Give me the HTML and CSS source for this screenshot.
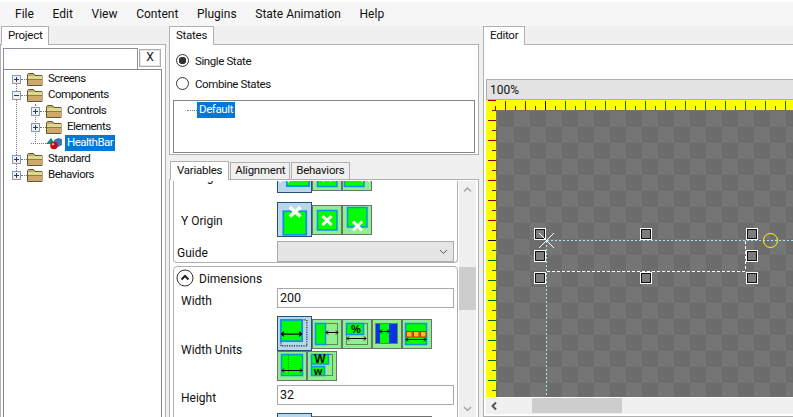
FILE: index.html
```html
<!DOCTYPE html>
<html lang="en">
<head>
  <meta charset="UTF-8">
  <title>Gum</title>
  <link rel="stylesheet" href="styles.css">
</head>
<body>

  <!-- shared icons -->
  <svg class="defs" width="0" height="0">
    <defs>
      <symbol id="folder" viewBox="0 0 16 13">
        <path d="M.5 12.5V1.5l1-1h5l1.5 2h7v10z" fill="#c9a468" stroke="#66562c"/>
        <rect x="1" y="3" width="14" height="3" fill="#dcd990"/>
        <rect x="1" y="6" width="14" height="1" fill="#8f7a42"/>
        <rect x="1" y="7" width="14" height="5" fill="#cfa96c"/>
      </symbol>
      <symbol id="plus" viewBox="0 0 9 9">
        <rect x=".5" y=".5" width="8" height="8" fill="#eef0f4" stroke="#8e99a8"/>
        <path d="M2 4.5h5M4.5 2v5" stroke="#23387a"/>
      </symbol>
      <symbol id="minus" viewBox="0 0 9 9">
        <rect x=".5" y=".5" width="8" height="8" fill="#eef0f4" stroke="#8e99a8"/>
        <path d="M2 4.5h5" stroke="#23387a"/>
      </symbol>
      <pattern id="ticks-top-red" width="20" height="10" patternUnits="userSpaceOnUse">
        <path d="M19.5 1v9M9.5 6v4" stroke="#a00000"/>
      </pattern>
      <pattern id="ticks-top-green" width="20" height="10" patternUnits="userSpaceOnUse">
        <path d="M19.5 1v9M9.5 6v4" stroke="#0b6b0b"/>
      </pattern>
      <pattern id="ticks-left-red" width="10" height="20" patternUnits="userSpaceOnUse">
        <path d="M2 10.5h8M6 .5h4" stroke="#a00000"/>
      </pattern>
      <pattern id="ticks-left-green" width="10" height="20" patternUnits="userSpaceOnUse">
        <path d="M2 10.5h8M6 .5h4" stroke="#0b6b0b"/>
      </pattern>
    </defs>
  </svg>

  <header class="menubar">
    <span>File</span>
    <span>Edit</span>
    <span>View</span>
    <span>Content</span>
    <span>Plugins</span>
    <span>State Animation</span>
    <span>Help</span>
  </header>

  <div class="columns">

    <!-- project -->
    <section class="col col-project">
      <div class="tabs"><div class="tab tab-on">Project</div></div>
      <div class="panel project-panel">
        <div class="search">
          <div class="search-input"></div>
          <div class="search-clear">X</div>
        </div>
        <div class="tree">
          <i class="tree-line tree-line-root"></i>
          <i class="tree-line tree-line-sub"></i>
          <div class="tree-row">
            <svg class="expander"><use href="#plus"/></svg><i class="stub"></i>
            <svg class="folder"><use href="#folder"/></svg><span class="node">Screens</span>
          </div>
          <div class="tree-row">
            <svg class="expander"><use href="#minus"/></svg><i class="stub"></i>
            <svg class="folder"><use href="#folder"/></svg><span class="node">Components</span>
          </div>
          <div class="tree-row level-1">
            <svg class="expander"><use href="#plus"/></svg><i class="stub"></i>
            <svg class="folder"><use href="#folder"/></svg><span class="node">Controls</span>
          </div>
          <div class="tree-row level-1">
            <svg class="expander"><use href="#plus"/></svg><i class="stub"></i>
            <svg class="folder"><use href="#folder"/></svg><span class="node">Elements</span>
          </div>
          <div class="tree-row level-1">
            <i class="stub stub-leaf"></i>
            <svg class="folder" viewBox="0 0 16 13">
              <path d="M0 7 5 1l4 6z" fill="#0d8a82"/>
              <path d="M8 3l4-2 4 1v6l-4 2-4-2z" fill="#3b74b8"/>
              <circle cx="8" cy="8.5" r="3.800" fill="#c40d12"/>
              <circle cx="7" cy="7.300" r="1.200" fill="#f4a0a0"/>
            </svg><span class="node node-on">HealthBar</span>
          </div>
          <div class="tree-row">
            <svg class="expander"><use href="#plus"/></svg><i class="stub"></i>
            <svg class="folder"><use href="#folder"/></svg><span class="node">Standard</span>
          </div>
          <div class="tree-row">
            <svg class="expander"><use href="#plus"/></svg><i class="stub"></i>
            <svg class="folder"><use href="#folder"/></svg><span class="node">Behaviors</span>
          </div>
        </div>
      </div>
    </section>

    <!-- states + variables -->
    <section class="col col-middle">
      <div class="tabs"><div class="tab tab-on">States</div></div>
      <div class="panel states-panel">
        <div class="radio-row"><i class="radio radio-on"></i>Single State</div>
        <div class="radio-row"><i class="radio"></i>Combine States</div>
        <div class="state-list">
          <i class="state-stub"></i><span class="node node-on">Default</span>
        </div>
      </div>

      <div class="tabs tabs-vars">
        <div class="tab tab-on">Variables</div>
        <div class="tab">Alignment</div>
        <div class="tab">Behaviors</div>
      </div>
      <div class="panel vars-panel">
        <div class="vars-scroll">
          <div class="group group-origin">
            <div class="prop prop-first">
              <label>X Origin</label>
              <div class="choices">
                <div class="choice choice-on"><svg viewBox="0 0 28 28"><rect class="frame" x="7.500" y="4" width="19" height="19"/><path class="cross" d="M1 10l9 9m0-9l-9 9"/></svg></div>
                <div class="choice"><svg viewBox="0 0 28 28"><rect class="frame" x="4.500" y="5" width="19.500" height="19.500"/><path class="cross" d="M9.500 10l9 9m0-9l-9 9"/></svg></div>
                <div class="choice"><svg viewBox="0 0 28 28"><rect class="frame" x="1.500" y="5" width="19.500" height="19.500"/><path class="cross" d="M18 10l9 9m0-9l-9 9"/></svg></div>
              </div>
            </div>
            <div class="prop prop-y">
              <label>Y Origin</label>
              <div class="choices">
                <div class="choice choice-on"><svg viewBox="0 0 28 28"><rect class="frame" x="4.500" y="7" width="19.500" height="20"/><path class="cross" d="M10 3.500l9 8m0-8l-9 8"/></svg></div>
                <div class="choice"><svg viewBox="0 0 28 28"><rect class="frame" x="4.500" y="4.500" width="19.500" height="19.500"/><path class="cross" d="M9.500 10l9 9m0-9l-9 9"/></svg></div>
                <div class="choice"><svg viewBox="0 0 28 28"><rect class="frame" x="4.500" y="1.500" width="19.500" height="19.500"/><path class="cross" d="M10 15.500l9 9m0-9l-9 9"/></svg></div>
              </div>
            </div>
            <div class="prop prop-guide">
              <label class="label-guide">Guide</label>
              <div class="dropdown">
                <svg width="9" height="6" viewBox="0 0 9 6"><path d="M1 1l3.500 3.500L8 1" fill="none" stroke="#555"/></svg>
              </div>
            </div>
          </div>

          <div class="group group-dims">
            <div class="group-head">
              <svg width="18" height="18" viewBox="0 0 18 18">
                <circle cx="9" cy="9" r="8" fill="#fff" stroke="#333"/>
                <path d="M5.500 10.500 9 7l3.500 3.500" fill="none" stroke="#222" stroke-width="2"/>
              </svg>
              <span class="group-title">Dimensions</span>
            </div>
            <div class="prop">
              <label class="label-low">Width</label>
              <div class="textbox">200</div>
            </div>
            <div class="prop prop-units">
              <label>Width Units</label>
              <div class="choices">
                <div class="choice choice-on"><svg viewBox="0 0 28 28">
                  <rect class="dash" x="2.500" y="2.500" width="22" height="22"/>
                  <rect class="frame" x="2.500" y="2.500" width="18" height="18"/>
                  <path class="arrow" d="M3 14.500h17M5 12.500l-2 2 2 2M18 12.500l2 2-2 2"/></svg></div>
                <div class="choice"><svg viewBox="0 0 28 28">
                  <rect class="dash" x="2.500" y="3.500" width="22" height="21"/>
                  <rect class="frame" x="2.500" y="3.500" width="10" height="21"/>
                  <path class="arrow" d="M13 12.500h12M15 10.500l-2 2 2 2M23 10.500l2 2-2 2"/></svg></div>
                <div class="choice"><svg viewBox="0 0 28 28">
                  <rect class="dash" x="3.500" y="3.500" width="21" height="21"/>
                  <rect class="frame" x="3.500" y="3.500" width="17" height="11"/>
                  <text class="pct" x="13" y="13">%</text>
                  <path class="arrow" d="M4 18.500h19M6 16.500l-2 2 2 2M21 16.500l2 2-2 2"/></svg></div>
                <div class="choice"><svg viewBox="0 0 28 28">
                  <rect class="dash" x="2.500" y="3.500" width="22" height="20"/>
                  <rect x="3" y="4" width="4" height="19" fill="#0b2ee8"/>
                  <rect x="7" y="4" width="9" height="19" fill="#0f0"/>
                  <rect x="16" y="4" width="8" height="19" fill="#0b2ee8"/>
                  <path class="arrow" d="M7 11.500h9M9 9.500l-2 2 2 2M14 9.500l2 2-2 2"/></svg></div>
                <div class="choice"><svg viewBox="0 0 28 28">
                  <rect class="frame" x="2.500" y="3.500" width="21" height="21"/>
                  <rect class="cell" x="3.500" y="11.500" width="5.500" height="5.500"/>
                  <rect class="cell" x="10.500" y="11.500" width="5.500" height="5.500"/>
                  <rect class="cell" x="17.500" y="11.500" width="5.500" height="5.500"/>
                  <path class="arrow" d="M3 19.500h20M5 17.500l-2 2 2 2M21 17.500l2 2-2 2"/></svg></div>
                <div class="choice"><svg viewBox="0 0 28 28">
                  <rect class="frame" x="3.500" y="2.500" width="21" height="21"/>
                  <path d="M10.500 3v20" stroke="#0a9a2a" stroke-dasharray="1 1"/>
                  <path class="arrow" d="M4 18.500h20M6 16.500l-2 2 2 2M22 16.500l2 2-2 2"/></svg></div>
                <div class="choice"><svg viewBox="0 0 28 28">
                  <rect class="dash" x="3.500" y="2.500" width="21" height="21"/>
                  <rect class="frame" x="3.500" y="2.500" width="17" height="9.500"/>
                  <rect class="frame" x="3.500" y="14.500" width="13" height="9"/>
                  <text class="big-w" x="12" y="11">W</text>
                  <text class="small-w" x="10" y="22.500">w</text></svg></div>
              </div>
            </div>
            <div class="prop">
              <label class="label-low">Height</label>
              <div class="textbox">32</div>
            </div>
            <div class="prop prop-height-units">
              <label></label>
              <div class="choices">
                <div class="choice choice-on"></div>
                <div class="choice"></div>
                <div class="choice"></div>
                <div class="choice"></div>
                <div class="choice"></div>
              </div>
            </div>
          </div>
        </div>

        <div class="vscroll">
          <svg width="17" height="17" viewBox="0 0 17 17"><path d="M5 10.500l3.500-3.500 3.500 3.500" fill="none" stroke="#a6a6a6" stroke-width="1.500"/></svg>
          <div class="vtrack"><div class="vthumb"></div></div>
          <svg width="17" height="17" viewBox="0 0 17 17"><path d="M5 7l3.500 3.500L12 7" fill="none" stroke="#a6a6a6" stroke-width="1.500"/></svg>
        </div>
      </div>
    </section>

    <!-- editor -->
    <section class="col col-editor">
      <div class="tabs"><div class="tab tab-on">Editor</div></div>
      <div class="panel editor-panel">
        <div class="zoombar">100%</div>
        <svg class="ruler-top" width="307" height="10">
          <rect width="59" height="10" fill="url(#ticks-top-red)"/>
          <path d="M2 .5h8" stroke="#a00000"/>
          <path d="M59.500 1v9" stroke="#000"/>
          <rect x="60" width="247" height="10" fill="url(#ticks-top-green)"/>
        </svg>
        <div class="stage">
          <svg class="ruler-left" width="10" height="287">
            <rect width="10" height="130" fill="url(#ticks-left-red)"/>
            <path d="M2 130.500h8" stroke="#111"/>
            <rect y="131" width="10" height="156" fill="url(#ticks-left-green)"/>
          </svg>
          <div class="canvas">
            <svg class="overlay" width="297" height="287" shape-rendering="crispEdges">
              <path class="guide" d="M50.500 130.500H297M50.500 130.500V287"/>
              <path class="outline" d="M50.500 161.500H250M249.500 131v30"/>
              <g class="handles">
                <rect x="38.500" y="118.500" width="11" height="11"/>
                <rect x="144.500" y="118.500" width="11" height="11"/>
                <rect x="250.500" y="118.500" width="11" height="11"/>
                <rect x="38.500" y="140.500" width="11" height="11"/>
                <rect x="250.500" y="140.500" width="11" height="11"/>
                <rect x="38.500" y="162.500" width="11" height="11"/>
                <rect x="144.500" y="162.500" width="11" height="11"/>
                <rect x="250.500" y="162.500" width="11" height="11"/>
              </g>
              <g class="handles-inner">
                <rect x="39.500" y="119.500" width="9" height="9"/>
                <rect x="145.500" y="119.500" width="9" height="9"/>
                <rect x="251.500" y="119.500" width="9" height="9"/>
                <rect x="39.500" y="141.500" width="9" height="9"/>
                <rect x="251.500" y="141.500" width="9" height="9"/>
                <rect x="39.500" y="163.500" width="9" height="9"/>
                <rect x="145.500" y="163.500" width="9" height="9"/>
                <rect x="251.500" y="163.500" width="9" height="9"/>
              </g>
              <path class="origin" shape-rendering="auto" d="M43 123l15 15m0-15l-15 15"/>
              <circle class="rotate" shape-rendering="auto" cx="274.500" cy="130.500" r="7"/>
            </svg>
          </div>
        </div>
        <div class="hscroll">
          <svg width="16" height="16" viewBox="0 0 16 16"><path d="M10 4.500 6.500 8l3.500 3.500" fill="none" stroke="#555" stroke-width="2"/></svg>
          <div class="hthumb"></div>
        </div>
      </div>
    </section>

  </div>

</body>
</html>
```

FILE: styles.css
```css
* {
  box-sizing: border-box;
}

body {
  margin: 0;
  width: 793px;
  height: 417px;
  overflow: hidden;
  background-color: #f0f0f0;
  font-family: Roboto, "Noto Sans", sans-serif;
  font-size: 12px;
  color: #111;
}

.defs {
  position: absolute;
}

.menubar {
  height: 26px;
  border-top: 2px solid #fff;
  background-color: #f6f6f6;
  display: flex;
  align-items: center;
  padding: 0 0 0 15px;
  gap: 18.7px;
}

.columns {
  display: flex;
  height: 391px;
}

.col {
  display: flex;
  flex-direction: column;
}

.col-project {
  width: 166px;
  margin-right: 3px;
}

.col-middle {
  width: 310px;
  margin-right: 4px;
}

.col-editor {
  width: 310px;
}

/* tabs */
.tabs {
  display: flex;
  height: 18px;
  align-items: flex-end;
}

.col-project .tabs {
  padding-left: 1px;
}

.tab {
  height: 17px;
  padding: 0 4px;
  line-height: 14px;
  font-size: 11.5px;
  letter-spacing: -0.25px;
  background-color: #f0f0f0;
  border: 1px solid #b0b0b0;
  border-bottom: 0;
  margin-left: 1px;
}

.tab-on {
  height: 19px;
  margin-left: 0;
  margin-bottom: -1px;
  padding: 0 6px;
  line-height: 16px;
  background-color: #fff;
  position: relative;
  z-index: 1;
}

.panel {
  border: 1px solid #b0b0b0;
  background-color: #fff;
}

/* project */
.project-panel {
  flex: 1;
  border-bottom: 0;
  padding: 3px 3px 0 2px;
  display: flex;
  flex-direction: column;
}

.search {
  display: flex;
  height: 21px;
}

.search-input {
  width: 135px;
  border: 1px solid #8a8f98;
  border-bottom: 0;
}

.search-clear {
  width: 22px;
  height: 18px;
  margin: 1px 0 0 1px;
  border: 1px solid #adadad;
  box-shadow: inset 0 0 0 1px #e6e6e6;
  text-align: center;
  line-height: 15px;
}

.tree {
  flex: 1;
  position: relative;
  border: 1px solid #828790;
  border-bottom: 0;
  padding-top: 1px;
  font-size: 11.5px;
  letter-spacing: -0.5px;
}

.tree-row {
  height: 16px;
  padding-left: 8px;
  display: flex;
  align-items: center;
}

.level-1 {
  padding-left: 27px;
}

.expander {
  width: 9px;
  height: 9px;
  flex: none;
  position: relative;
  z-index: 1;
}

.stub {
  width: 6px;
  border-top: 1px dotted #777;
}

.stub-leaf {
  width: 15px;
}

.folder {
  width: 16px;
  height: 13px;
  flex: none;
  margin-right: 3px;
}

.node {
  padding: 0 2px 1px;
  line-height: 15px;
}

.node-on {
  background-color: #0078d7;
  color: #fff;
}

.tree-line {
  position: absolute;
  border-left: 1px dotted #777;
}

.tree-line-root {
  left: 12px;
  top: 13px;
  height: 92px;
}

.tree-line-sub {
  left: 31px;
  top: 34px;
  height: 40px;
}

/* states */
.states-panel {
  height: 111px;
  padding: 4px 3px 0 3px;
  font-size: 11.5px;
  letter-spacing: -0.4px;
}

.radio-row {
  height: 23px;
  padding-left: 3px;
  display: flex;
  align-items: center;
  gap: 6px;
}

.radio {
  width: 13px;
  height: 13px;
  border: 1px solid #333;
  border-radius: 50%;
  background-color: #fff;
}

.radio-on {
  background: radial-gradient(circle, #333 0 3.5px, #fff 4px);
}

.state-list {
  height: 53px;
  margin-top: 5px;
  border: 1px solid #828790;
  padding: 1px 0 0 13px;
  display: flex;
  align-items: flex-start;
}

.state-stub {
  width: 10px;
  margin-top: 8px;
  border-top: 1px dotted #777;
}

/* variables */
.tabs-vars {
  margin-top: 6px;
  height: 18px;
  padding-left: 1px;
}

.vars-panel {
  flex: 1;
  border-bottom: 0;
  padding: 1px 2px 0 3px;
  display: flex;
  overflow: hidden;
  position: relative;
}

.vars-scroll {
  width: 286px;
  height: 240px;
  overflow: hidden;
}

.group {
  border: 1px solid #b0b0b0;
  border-radius: 4px;
}

.group-origin {
  margin-top: -23px;
  margin-bottom: 3px;
  border-top: 0;
}

.group-head {
  height: 21px;
  padding-left: 2px;
  display: flex;
  align-items: center;
  gap: 5px;
}

.group-title {
  padding-top: 2px;
}

.prop {
  display: flex;
  align-items: center;
}

.prop label {
  width: 103px;
  flex: none;
  padding: 2px 0 0 7px;
}

.prop label.label-guide {
  padding-left: 3px;
}

.prop label.label-low {
  padding-top: 6px;
}

.prop-y {
  margin-top: 9px;
}

.prop-guide {
  margin-top: 4px;
}

.dropdown {
  width: 177px;
  height: 21px;
  border: 1px solid #acacac;
  background-color: #e5e5e5;
  display: flex;
  align-items: center;
  justify-content: flex-end;
  padding-right: 5px;
}

.textbox {
  width: 177px;
  height: 20px;
  border: 1px solid #a9a9a9;
  padding-left: 2px;
  line-height: 17px;
  font-size: 12.5px;
  background-color: #fff;
}

.choices {
  width: 177px;
  display: flex;
  flex-wrap: wrap;
  align-items: center;
}

.choice {
  width: 30px;
  height: 30px;
  border: 1px solid #707070;
  background-color: #90ee90;
  overflow: hidden;
}

.choice svg {
  display: block;
  width: 100%;
  height: 100%;
}

.choice-on {
  width: 35px;
  height: 35px;
  border-color: #24527a;
  background-color: #b9d7ea;
}

.frame {
  fill: #0f0;
  stroke: #0d92e6;
  stroke-width: 1.5;
}

.cross {
  fill: none;
  stroke: #fff;
  stroke-width: 3;
}

.dash {
  fill: none;
  stroke: #222;
  stroke-dasharray: 1 1;
}

.arrow {
  fill: none;
  stroke: #000;
}

.cell {
  fill: #fdc31c;
  stroke: #d8200c;
}

.pct {
  font-family: "Liberation Sans", sans-serif;
  font-size: 11px;
  font-weight: bold;
  text-anchor: middle;
}

.big-w {
  font-family: "Liberation Sans", sans-serif;
  font-size: 12px;
  font-weight: bold;
  text-anchor: middle;
}

.small-w {
  font-family: "Liberation Sans", sans-serif;
  font-size: 11px;
  font-weight: bold;
  text-anchor: middle;
}

.prop-units {
  margin-top: 8px;
}

.prop-units + .prop {
  margin-top: 4px;
}

.prop-height-units {
  margin-top: 8px;
}

.vscroll {
  width: 17px;
  margin-left: 1px;
  background-color: #f0f0f0;
  display: flex;
  flex-direction: column;
}

.vtrack {
  flex: 1;
  padding-top: 69px;
}

.vthumb {
  height: 43px;
  background-color: #cdcdcd;
}

/* editor */
.editor-panel {
  height: 373px;
  border-right: 0;
  padding: 34px 0 0 2px;
  display: flex;
  flex-direction: column;
}

.zoombar {
  height: 21px;
  border: 1px solid #b0b0b0;
  border-right: 0;
  background-color: #e3e3e3;
  padding-left: 3px;
  line-height: 21px;
}

.ruler-top {
  display: block;
  flex: none;
  background-color: #ff0;
}

.stage {
  display: flex;
  height: 287px;
}

.ruler-left {
  display: block;
  flex: none;
  background-color: #ff0;
}

.canvas {
  position: relative;
  flex: 1;
  background: repeating-conic-gradient(#757575 0 25%, #6c6c6c 0 50%) 2px 1px / 32px 32px;
}

.overlay {
  position: absolute;
  left: 0;
  top: 0;
}

.guide {
  fill: none;
  stroke: #a8e4f4;
  stroke-dasharray: 2 2;
}

.outline {
  fill: none;
  stroke: #fff;
  stroke-dasharray: 3 2;
}

.handles rect {
  fill: none;
  stroke: #fff;
}

.handles-inner rect {
  fill: #7c7c7c;
  stroke: #111;
}

.origin {
  fill: none;
  stroke: #fff;
}

.rotate {
  fill: none;
  stroke: #ff0;
}

.hscroll {
  height: 16px;
  margin-top: 1px;
  background-color: #f0f0f0;
  display: flex;
}

.hthumb {
  width: 90px;
  height: 15px;
  margin-left: 30px;
  background-color: #cdcdcd;
}
```
